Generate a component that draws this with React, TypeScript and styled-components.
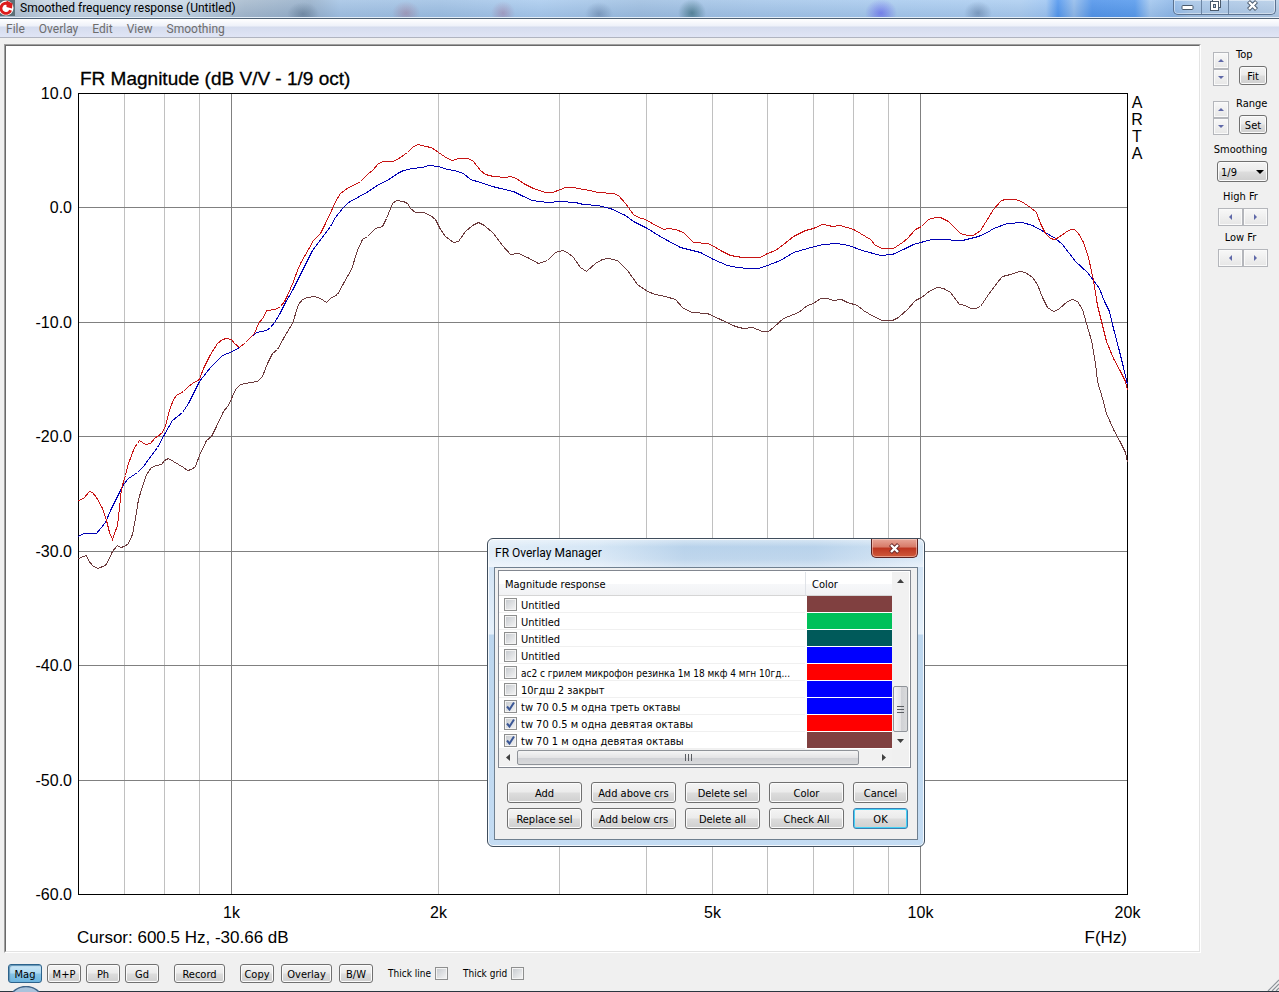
import React from "react";
import styled, { createGlobalStyle, css } from "styled-components";

const GlobalStyle = createGlobalStyle`
  * { box-sizing: border-box; }
  body {
    margin: 0;
    background: #f0f0f0;
    color: #000;
    font: 11px/14px "DejaVu Sans Condensed", "Noto Sans", sans-serif;
  }
  button, select, input { font: inherit; color: inherit; margin: 0; }
`;

const uiFont = `Roboto, "Noto Sans", sans-serif`;

/* ---------- window frame ---------- */

const Window = styled.div`
  position: relative;
  display: flex;
  flex-direction: column;
  min-height: 100vh;
  overflow: hidden;
`;

const TitleBar = styled.header`
  display: flex;
  justify-content: space-between;
  height: 19px;
  border-bottom: 1px solid #4f6275;
  box-shadow: inset 0 -1px 0 #e4eef8;
  background:
    linear-gradient(180deg, rgba(255, 255, 255, 0.15), rgba(90, 120, 160, 0.15)),
    radial-gradient(16px 12px at 303px 14px, rgba(70, 95, 120, 0.5), transparent),
    radial-gradient(14px 12px at 406px 13px, rgba(160, 110, 140, 0.5), transparent),
    radial-gradient(12px 12px at 503px 13px, rgba(160, 110, 150, 0.5), transparent),
    radial-gradient(14px 12px at 599px 14px, rgba(80, 110, 150, 0.5), transparent),
    radial-gradient(14px 14px at 692px 13px, rgba(40, 95, 110, 0.7), transparent),
    radial-gradient(16px 14px at 881px 13px, rgba(90, 90, 240, 0.7), transparent),
    radial-gradient(14px 12px at 978px 13px, rgba(70, 100, 140, 0.5), transparent),
    linear-gradient(90deg,
      #a9b9c9 0, #c8d6e4 50px, #cad9e7 180px, #a4b8cc 245px, #93adc8 310px,
      #a2c2e4 340px, #9dbfe3 440px, #a8caee 540px, #9cbde0 640px, #a3c5e9 760px,
      #a6c9ee 900px, #aaccf0 1020px, #9cc4f2 1046px, #4a92ee 1058px, #8fb9ea 1074px,
      #4a90ea 1092px, #5096ec 1135px, #9ec4ee 1150px, #8bb6e8 1172px, #a5c4e6 1190px, #b4cce6 100%);
`;

const WindowTitle = styled.h1`
  display: flex;
  align-items: center;
  gap: 5px;
  margin: 0;
  height: 16px;
  font: 12px/16px ${uiFont};
`;

const CaptionGroup = styled.div`
  display: flex;
  height: 15px;
  margin-right: 3px;
  border: 1px solid #5b7290;
  border-top: 0;
  border-radius: 0 0 5px 5px;
  box-shadow: inset 0 0 0 1px rgba(255, 255, 255, 0.45);
`;

const CaptionButton = styled.button<{ $wide?: boolean }>`
  display: flex;
  align-items: flex-start;
  justify-content: center;
  width: ${(p) => (p.$wide ? 47 : 27)}px;
  padding: 0;
  border: 0;
  background: none;
  & + & { border-left: 1px solid #6d86a4; }
`;

const MenuBar = styled.nav`
  display: flex;
  gap: 14px;
  height: 19px;
  padding: 0 6px;
  border-bottom: 1px solid #b0b4c0;
  background: linear-gradient(180deg, #ffffff 0, #eef1f9 7px, #d5dcee 8px, #e0e5f5 100%);
`;

const MenuItem = styled.button`
  padding: 0;
  border: 0;
  background: none;
  color: #6d6d6d;
  font: 12px/20px ${uiFont};
`;

const Workspace = styled.div`
  display: flex;
  flex: 1;
  padding-top: 6px;
`;

const MainColumn = styled.main`
  flex: 1;
  min-width: 0;
  padding-left: 4px;
`;

const ChartFrame = styled.section`
  border: 1px solid;
  border-color: #a0a0a0 #fff #fff #a0a0a0;
`;

const ChartSurface = styled.div`
  border: 1px solid;
  border-color: #696969 #e3e3e3 #e3e3e3 #696969;
  background: #fff;
`;

const ChartSvg = styled.svg`
  display: block;
  width: 100%;
  height: auto;
  font-family: "Liberation Sans", Arial, sans-serif;
  font-size: 16px;
`;

/* ---------- shared controls ---------- */

const buttonFace = css`
  border: 1px solid #707070;
  border-radius: 3px;
  background: linear-gradient(180deg, #f4f4f4 0, #ebebeb 48%, #dddddd 52%, #cfcfcf 100%);
  box-shadow: inset 0 0 0 1px #fbfbfb;
`;

const PushButton = styled.button<{ $width: number; $tall?: boolean; $pressed?: boolean; $isDefault?: boolean }>`
  ${buttonFace}
  width: ${(p) => p.$width}px;
  height: ${(p) => (p.$tall ? 21 : 19)}px;
  padding: 2px 0 0;
  line-height: 16px;
  white-space: nowrap;
  ${(p) => p.$pressed && css`
    border-color: #2c628b;
    background: linear-gradient(180deg, #cfe8f7 0, #b0daf2 45%, #86c2e6 55%, #6cb4de 100%);
    box-shadow: inset 1px 1px 1px #5f93b5;
  `}
  ${(p) => p.$isDefault && css`
    border-color: #3c7fb1;
    box-shadow: inset 0 0 0 1px #46d2f6;
  `}
`;

const CheckBox = styled.input.attrs({ type: "checkbox" })`
  appearance: none;
  flex: none;
  width: 13px;
  height: 13px;
  border: 1px solid #8e8f8f;
  background: linear-gradient(135deg, #c4c8cd, #f6f6f6);
  box-shadow: inset 0 0 0 1px #f4f4f4;
`;

const CheckHolder = styled.span`
  display: grid;
  flex: none;
  width: 13px;
  height: 13px;
  & > * { grid-area: 1 / 1; }
  svg { pointer-events: none; }
`;

/* ---------- bottom toolbar ---------- */

const ToolBar = styled.div`
  display: flex;
  align-items: center;
  gap: 15px;
  padding: 11px 4px 8px;
`;

const ToolGroup = styled.div<{ $gap: number }>`
  display: flex;
  gap: ${(p) => p.$gap}px;
`;

const ToolCheck = styled.label`
  display: flex;
  align-items: center;
  gap: 4px;
  height: 18px;
  font-size: 10px;
  white-space: nowrap;
`;

/* ---------- right side panel ---------- */

const SidePanel = styled.aside`
  flex: none;
  width: 78px;
  padding: 4px 11px 0 12px;
`;

const SpinStack = styled.div`
  display: flex;
  flex-direction: column;
  gap: 11px;
  margin-bottom: 8px;
`;

const SpinGroup = styled.div`
  display: flex;
  gap: 7px;
`;

const Spinner = styled.div`
  width: 16px;
  margin-top: 4px;
`;

const ArrowButton = styled.button<{ $kind: "spin" | "scroll" | "bar" }>`
  display: flex;
  align-items: center;
  justify-content: center;
  padding: 0;
  border: 1px solid #b4b6bb;
  background: linear-gradient(180deg, #f8f8f8, #e6e6e6);
  box-shadow: inset 0 0 0 1px #fafafa;
  width: ${(p) => (p.$kind === "spin" ? 16 : p.$kind === "scroll" ? 25 : 17)}px;
  height: ${(p) => (p.$kind === "scroll" ? 18 : 17)}px;
  ${(p) => p.$kind === "bar" && css`
    border: 0;
    background: none;
    box-shadow: none;
  `}
`;

const SpinLabel = styled.div`
  display: flex;
  flex-direction: column;
  width: 32px;
  gap: 4px;
  button { margin-left: 3px; }
`;

const SideField = styled.div<{ $space: number }>`
  display: flex;
  flex-direction: column;
  align-items: center;
  gap: 4px;
  margin-bottom: ${(p) => p.$space}px;
`;

const Pair = styled.div`
  display: flex;
  margin-left: 4px;
`;

const SelectWrap = styled.div`
  display: grid;
  align-items: center;
  margin-left: 4px;
  & > * { grid-area: 1 / 1; }
  svg { justify-self: end; margin-right: 4px; pointer-events: none; }
`;

const SmoothSelect = styled.select`
  ${buttonFace}
  appearance: none;
  width: 51px;
  height: 21px;
  padding: 2px 3px 0;
`;

/* ---------- overlay manager dialog ---------- */

const Dialog = styled.section`
  position: absolute;
  left: 487px;
  top: 538px;
  width: 438px;
  padding: 0 6px 6px;
  border: 1px solid #3f4d5c;
  border-radius: 6px;
  background:
    linear-gradient(180deg, rgba(255, 255, 255, 0.5), transparent 8px, transparent 20px, rgba(255, 255, 255, 0.3) 28px) 0 0 / 100% 28px no-repeat,
    linear-gradient(90deg, rgba(255, 255, 255, 0.5) 0, rgba(255, 255, 255, 0.3) 25%, rgba(160, 190, 220, 0.3) 45%, rgba(160, 190, 220, 0.3) 75%, rgba(255, 255, 255, 0.3) 100%) 0 0 / 100% 28px no-repeat,
    linear-gradient(180deg, #bdd8f0 0, #d3e4f5 28px, #e6f1fb 95px, #bcd6ee 96px, #c4dcf3 100%);
  box-shadow: inset 0 0 0 1px rgba(255, 255, 255, 0.8);
`;

const DialogHeader = styled.header`
  display: flex;
  justify-content: space-between;
  height: 28px;
`;

const DialogTitle = styled.h2`
  margin: 0;
  padding: 5px 1px;
  font: 12px/18px ${uiFont};
`;

const CloseButton = styled.button`
  display: flex;
  align-items: center;
  justify-content: center;
  width: 47px;
  height: 19px;
  padding: 0;
  border: 1px solid #5a2222;
  border-top: 0;
  border-radius: 0 0 5px 5px;
  background: linear-gradient(180deg, #e8a698 0, #d77a68 45%, #bd3520 50%, #cf5a3c 100%);
  box-shadow: inset 0 0 0 1px rgba(255, 220, 210, 0.5);
`;

const DialogBody = styled.div`
  padding: 2px 6px 10px 3px;
  border: 1px solid #6f8090;
  background: #f0f0f0;
`;

const ListBox = styled.div`
  display: grid;
  grid-template-columns: 1fr 17px;
  padding: 1px 1px 1px 0;
  border: 1px solid #828790;
  background: #fff;
`;

const ListTable = styled.table`
  width: 100%;
  border-collapse: separate;
  border-spacing: 0;
  table-layout: fixed;
  th, td { padding: 0; text-align: left; font-weight: normal; }
`;

const HeadCell = styled.th<{ $width?: number }>`
  width: ${(p) => (p.$width ? `${p.$width}px` : "auto")};
  height: 24px;
  border-bottom: 1px solid #d5d5d5;
  background: linear-gradient(180deg, #fff 50%, #f7f8fa 51%, #f1f2f4);
  & > span { display: block; padding: 2px 0 0 6px; }
  & + & { border-left: 1px solid #e0e3e8; }
  & + & > span { padding-left: 5px; }
`;

const NameCell = styled.td`
  height: 17px;
  border-bottom: 1px solid #f0f0f0;
`;

const RowLabel = styled.label<{ $long: boolean }>`
  display: flex;
  align-items: center;
  gap: 4px;
  height: 16px;
  padding: 1px 0 0 5px;
  font-size: ${(p) => (p.$long ? 10 : 11)}px;
  white-space: nowrap;
  & > span:last-child { padding-top: 2px; }
`;

const ColorCell = styled.td<{ $color: string }>`
  border-bottom: 1px solid #fff;
  border-left: 2px solid #fff;
  background: ${(p) => p.$color};
  background-clip: padding-box;
`;

const VerticalBar = styled.div`
  display: flex;
  flex-direction: column;
  background: #f1f1f1;
`;

const HorizontalBar = styled.div`
  display: flex;
  gap: 1px;
  height: 17px;
  background: #f1f1f1;
`;

const BarSpace = styled.div<{ $grow: number }>`
  flex: ${(p) => p.$grow};
`;

const Thumb = styled.div<{ $vertical?: boolean }>`
  display: flex;
  align-items: center;
  justify-content: center;
  border: 1px solid #8f9399;
  border-radius: 2px;
  ${(p) => p.$vertical
    ? css`height: 46px; margin: 0 1px; background: linear-gradient(90deg, #f5f5f5, #e4e4e6 50%, #cfd0d4 51%, #d9dadc);`
    : css`flex: 342; margin: 1px 0; background: linear-gradient(180deg, #f5f5f5, #e4e4e6 50%, #cfd0d4 51%, #d9dadc);`}
`;

const Corner = styled.div`
  background: #f0f0f0;
`;

const ButtonGrid = styled.div`
  display: grid;
  grid-template-columns: repeat(5, auto);
  justify-content: space-between;
  gap: 5px 9px;
  padding: 14px 3px 0 9px;
`;

/* ---------- bottom edge ---------- */

const TaskbarEdge = styled.div`
  position: relative;
  height: 1px;
  background: #2b3640;
`;

const StartOrb = styled.svg`
  position: absolute;
  left: 10px;
  bottom: 0;
`;

const SizeGrip = styled.svg`
  position: absolute;
  right: 0;
  bottom: 1px;
`;

/* ---------- chart data ---------- */

const PLOT = { left: 78, right: 1127, top: 93, bottom: 894 };
const FREQ = { min: 600, max: 20000 };
const LEVEL = { min: -60, max: 10 };

const xOf = (f: number) =>
  Math.round(PLOT.left + ((PLOT.right - PLOT.left) * Math.log(f / FREQ.min)) / Math.log(FREQ.max / FREQ.min)) + 0.5;
const yOf = (db: number) =>
  Math.round(PLOT.top + ((PLOT.bottom - PLOT.top) * (LEVEL.max - db)) / (LEVEL.max - LEVEL.min)) + 0.5;

const minorFreqs = [700, 800, 900, 2000, 3000, 4000, 5000, 6000, 7000, 8000, 9000];
const majorFreqs = [1000, 10000];
const levels = [10, 0, -10, -20, -30, -40, -50, -60];
const freqLabels: [number, string][] = [[1000, "1k"], [2000, "2k"], [5000, "5k"], [10000, "10k"], [20000, "20k"]];

const curves = [
  {
    name: "tw 70 1 м одна девятая октавы",
    color: "#6b3a3c",
    points:
      "78,558 83,556 86,555 88,560 92,565 97,568 105,565 108,560 112,551 117,545 120,547 124,546 128,543 132,534 135,518 138,499 142,486 146,474 151,467 156,465 161,464 164,460 168,458 173,461 183,467 187,470 191,469 195,466 199,455 206,440 211,436 216,426 223,411 228,405 232,396 235,389 240,384 250,382 257,381 262,376 267,363 272,353 277,349 283,338 292,323 298,304 302,299 307,297 314,296 320,298 326,302 330,298 337,294 343,283 351,269 357,250 362,239 367,236 375,228 382,226 386,218 392,203 396,200 403,201 407,203 410,208 415,212 423,212 430,215 435,219 440,229 445,236 453,242 458,241 465,231 472,225 478,222 484,225 493,233 502,245 510,254 518,253 527,257 538,263 547,260 555,252 562,250 567,252 573,257 580,267 586,271 595,263 602,259 608,258 617,260 627,270 637,284 647,291 655,294 665,296 675,299 683,308 692,312 707,313 720,319 735,326 743,328 752,327 762,331 768,331 773,327 783,318 798,312 807,305 813,303 820,298 827,298 833,300 841,299 847,302 857,305 863,310 873,316 882,320 892,320 898,317 907,309 915,300 921,297 930,290 937,287 943,288 950,292 959,304 965,305 970,308 975,308 980,306 988,294 997,282 1002,276 1010,274 1019,271 1025,272 1032,277 1037,284 1042,297 1047,307 1053,311 1058,309 1067,301 1072,299 1077,301 1082,309 1086,323 1091,340 1095,363 1097,381 1102,398 1106,413 1113,429 1120,442 1125,452 1127,462",
  },
  {
    name: "tw 70 0.5 м одна треть октавы",
    color: "#0000b4",
    points:
      "78,536 83,533 96,533 105,522 110,510 116,498 123,484 128,478 137,472 143,466 148,459 157,447 164,434 172,420 182,412 188,403 199,381 210,367 222,355 232,351 239,347 245,342 251,336 256,332 266,330 270,327 274,322 279,314 285,302 292,290 300,274 312,250 330,226 335,217 342,208 348,202 368,191 375,186 390,178 397,173 403,170 412,168 422,167 428,165 438,166 447,169 454,170 463,173 470,179 480,182 492,186 500,188 513,191 523,196 532,200 547,202 560,201 575,202 583,204 597,205 610,208 625,215 633,221 647,228 658,235 667,240 680,247 700,252 713,259 727,265 737,267 748,268 758,268 767,265 780,260 793,252 807,248 822,244 837,243 848,245 862,250 880,255 892,254 903,249 913,244 931,239 945,239 955,240 962,240 978,236 987,232 993,228 1007,223 1022,222 1032,225 1043,231 1055,238 1062,244 1075,261 1087,272 1093,280 1099,288 1104,301 1109,311 1113,328 1118,347 1123,367 1127,384",
  },
  {
    name: "tw 70 0.5 м одна девятая октавы",
    color: "#c81414",
    points:
      "78,500 83,498 89,491 92,492 96,497 102,508 106,520 109,532 112,539 114,533 117,525 119,507 121,488 125,475 128,463 134,447 137,443 139,440 142,442 145,444 150,443 155,437 157,436 162,432 165,425 169,410 173,399 176,395 183,391 188,386 192,383 199,379 203,368 210,354 217,343 222,339 226,338 231,339 234,343 239,347 245,342 250,337 254,333 258,323 263,317 266,310 275,309 280,306 284,301 287,295 293,281 297,270 300,263 313,240 320,233 325,223 332,208 335,201 340,193 348,187 355,184 360,181 367,174 373,169 378,163 383,161 392,161 397,159 407,152 413,146 418,144 425,146 431,147 438,152 447,158 452,160 458,158 468,158 473,161 480,170 485,174 493,176 505,177 510,176 516,178 523,183 533,188 545,192 552,192 560,189 565,187 573,187 583,189 590,190 597,192 613,193 618,195 625,203 633,214 638,217 645,219 657,226 664,229 667,228 675,229 683,232 688,237 693,242 707,243 712,245 720,250 730,255 742,257 760,257 767,253 775,250 783,244 793,236 805,230 813,228 822,224 828,225 832,226 840,225 853,229 860,233 870,239 875,245 882,248 893,248 902,242 907,238 915,229 921,226 928,219 935,217 940,217 948,221 955,228 960,233 967,235 973,235 980,230 985,222 993,209 1001,200 1005,199 1015,199 1021,201 1030,207 1036,212 1040,223 1045,233 1050,238 1054,239 1058,237 1065,232 1070,229 1074,229 1078,233 1083,242 1088,257 1093,280 1097,305 1102,325 1106,341 1113,358 1120,371 1125,381 1127,390",
  },
];

const overlays = [
  { name: "Untitled", color: "#804040", on: false },
  { name: "Untitled", color: "#00c05a", on: false },
  { name: "Untitled", color: "#005a5a", on: false },
  { name: "Untitled", color: "#0000ff", on: false },
  { name: "ас2 с грилем микрофон резинка 1м 18 мкф 4 мгн 10гд...", color: "#ff0000", on: false },
  { name: "10гдш 2 закрыт", color: "#0000ff", on: false },
  { name: "tw 70 0.5 м одна треть октавы", color: "#0000ff", on: true },
  { name: "tw 70 0.5 м одна девятая октавы", color: "#ff0000", on: true },
  { name: "tw 70 1 м одна девятая октавы", color: "#804040", on: true },
];

/* ---------- small drawings ---------- */

const arrowShapes = {
  up: "M0 4H7L3.5 0Z",
  down: "M0 0H7L3.5 4Z",
  left: "M4 0V7L0 3.5Z",
  right: "M0 0V7L4 3.5Z",
};

function Arrow({ dir, color = "#5f68a8", size = 6 }: { dir: keyof typeof arrowShapes; color?: string; size?: number }) {
  const tall = dir === "left" || dir === "right";
  const depth = Math.ceil(size * 0.5);
  return (
    <svg
      width={tall ? depth : size}
      height={tall ? size : depth}
      viewBox={tall ? "0 0 4 7" : "0 0 7 4"}
      preserveAspectRatio="none"
      aria-hidden="true"
    >
      <path d={arrowShapes[dir]} fill={color} />
    </svg>
  );
}

function AppIcon() {
  return (
    <svg width="15" height="16" viewBox="0 0 15 16" aria-hidden="true">
      <rect width="15" height="16" fill="#5c7078" />
      <circle cx="6" cy="8" r="7.5" fill="#fff" />
      <path d="M10.6 10.2A5 5 0 1 1 7.5 3.6" fill="none" stroke="#dc1c1c" strokeWidth="3" />
      <path d="M6.5 0.5L12.5 3.5L12 8.5L6.5 7Z" fill="#dc1c1c" />
    </svg>
  );
}

function CrossIcon({ stroke }: { stroke: string }) {
  return (
    <svg width="13" height="11" viewBox="0 0 13 11" aria-hidden="true">
      <path d="M2.5 1.5L10.5 9.5M10.5 1.5L2.5 9.5" stroke={stroke} strokeWidth="4.2" />
      <path d="M3 2L10 9M10 2L3 9" stroke="#fff" strokeWidth="2.4" />
    </svg>
  );
}

function Tick({ checked, id }: { checked?: boolean; id: string }) {
  return (
    <CheckHolder>
      <CheckBox id={id} defaultChecked={checked} />
      {checked && (
        <svg width="13" height="13" viewBox="0 0 13 13" aria-hidden="true">
          <path d="M3 6.5L5.5 9.5L10 2.5" fill="none" stroke="#3b5796" strokeWidth="2" />
        </svg>
      )}
    </CheckHolder>
  );
}

function Grip({ vertical }: { vertical?: boolean }) {
  return (
    <svg width="8" height="8" viewBox="0 0 8 8" shapeRendering="crispEdges" aria-hidden="true">
      <path d={vertical ? "M0 1.5H7M0 4.5H7M0 7.5H7" : "M1.5 0V7M4.5 0V7M7.5 0V7"} stroke="#5a5d62" />
    </svg>
  );
}

/* ---------- sections ---------- */

function ResponseChart() {
  return (
    <ChartSvg viewBox="6 46 1193 905" role="img" aria-label="FR Magnitude">
      <g shapeRendering="crispEdges" fill="none">
        {minorFreqs.map((f) => (
          <path key={f} d={`M${xOf(f)} ${PLOT.top}V${PLOT.bottom}`} stroke="#c0c0c0" />
        ))}
        {majorFreqs.map((f) => (
          <path key={f} d={`M${xOf(f)} ${PLOT.top}V${PLOT.bottom}`} stroke="#808080" />
        ))}
        {levels.map((v) => (
          <path key={v} d={`M${PLOT.left} ${yOf(v)}H${PLOT.right}`} stroke="#808080" />
        ))}
        <rect x={PLOT.left + 0.5} y={PLOT.top + 0.5} width={PLOT.right - PLOT.left} height={PLOT.bottom - PLOT.top} stroke="#000" />
        {curves.map((c) => (
          <polyline key={c.name} points={c.points} stroke={c.color} transform="translate(0.5 0.5)" />
        ))}
      </g>
      <text x="80" y="85" fontSize="19" stroke="#000" strokeWidth="0.3">FR Magnitude (dB V/V - 1/9 oct)</text>
      {levels.map((v) => (
        <text key={v} x="72" y={yOf(v) + 5.5} textAnchor="end">{v.toFixed(1)}</text>
      ))}
      {freqLabels.map(([f, label]) => (
        <text key={f} x={xOf(f)} y="918" textAnchor="middle">{label}</text>
      ))}
      {["A", "R", "T", "A"].map((ch, i) => (
        <text key={i} x="1137" y={108 + i * 17} textAnchor="middle">{ch}</text>
      ))}
      <text x="77" y="943" fontSize="17">Cursor: 600.5 Hz, -30.66 dB</text>
      <text x="1127" y="943" fontSize="17" textAnchor="end">F(Hz)</text>
    </ChartSvg>
  );
}

function SpinControl({ label, action }: { label: string; action: string }) {
  return (
    <SpinGroup>
      <Spinner>
        <ArrowButton $kind="spin" aria-label={`${label} up`}><Arrow dir="up" /></ArrowButton>
        <ArrowButton $kind="spin" aria-label={`${label} down`}><Arrow dir="down" /></ArrowButton>
      </Spinner>
      <SpinLabel>
        <span>{label}</span>
        <PushButton $width={28}>{action}</PushButton>
      </SpinLabel>
    </SpinGroup>
  );
}

function FreqControl({ label, space }: { label: string; space: number }) {
  return (
    <SideField $space={space}>
      <span>{label}</span>
      <Pair>
        <ArrowButton $kind="scroll" aria-label={`${label} down`}><Arrow dir="left" /></ArrowButton>
        <ArrowButton $kind="scroll" aria-label={`${label} up`}><Arrow dir="right" /></ArrowButton>
      </Pair>
    </SideField>
  );
}

function OverlayManager() {
  return (
    <Dialog role="dialog" aria-labelledby="overlay-title">
      <DialogHeader>
        <DialogTitle id="overlay-title">FR Overlay Manager</DialogTitle>
        <CloseButton aria-label="Close"><CrossIcon stroke="#6b2a2a" /></CloseButton>
      </DialogHeader>
      <DialogBody>
        <ListBox>
          <ListTable>
            <thead>
              <tr>
                <HeadCell><span>Magnitude response</span></HeadCell>
                <HeadCell $width={87}><span>Color</span></HeadCell>
              </tr>
            </thead>
            <tbody>
              {overlays.map((o, i) => (
                <tr key={i}>
                  <NameCell>
                    <RowLabel htmlFor={`overlay-${i}`} $long={o.name.length > 40}>
                      <Tick id={`overlay-${i}`} checked={o.on} />
                      <span>{o.name}</span>
                    </RowLabel>
                  </NameCell>
                  <ColorCell $color={o.color} />
                </tr>
              ))}
            </tbody>
          </ListTable>
          <VerticalBar>
            <ArrowButton $kind="bar" aria-label="Scroll up"><Arrow dir="up" color="#404040" size={7} /></ArrowButton>
            <BarSpace $grow={1} />
            <Thumb $vertical><Grip vertical /></Thumb>
            <ArrowButton $kind="bar" aria-label="Scroll down"><Arrow dir="down" color="#404040" size={7} /></ArrowButton>
          </VerticalBar>
          <HorizontalBar>
            <ArrowButton $kind="bar" aria-label="Scroll left"><Arrow dir="left" color="#404040" size={7} /></ArrowButton>
            <Thumb><Grip /></Thumb>
            <BarSpace $grow={14} />
            <ArrowButton $kind="bar" aria-label="Scroll right"><Arrow dir="right" color="#404040" size={7} /></ArrowButton>
          </HorizontalBar>
          <Corner />
        </ListBox>
        <ButtonGrid>
          <PushButton $tall $width={75}>Add</PushButton>
          <PushButton $tall $width={85}>Add above crs</PushButton>
          <PushButton $tall $width={75}>Delete sel</PushButton>
          <PushButton $tall $width={75}>Color</PushButton>
          <PushButton $tall $width={55}>Cancel</PushButton>
          <PushButton $tall $width={75}>Replace sel</PushButton>
          <PushButton $tall $width={85}>Add below crs</PushButton>
          <PushButton $tall $width={75}>Delete all</PushButton>
          <PushButton $tall $width={75}>Check All</PushButton>
          <PushButton $tall $width={55} $isDefault>OK</PushButton>
        </ButtonGrid>
      </DialogBody>
    </Dialog>
  );
}

export default function App() {
  return (
    <>
      <GlobalStyle />
      <Window>
        <TitleBar>
          <WindowTitle><AppIcon />Smoothed frequency response (Untitled)</WindowTitle>
          <CaptionGroup>
            <CaptionButton aria-label="Minimize">
              <svg width="13" height="11" viewBox="0 0 13 11"><rect x="1" y="5.5" width="11" height="4" rx="1" fill="#fff" stroke="#4a5a6c" /></svg>
            </CaptionButton>
            <CaptionButton aria-label="Restore">
              <svg width="13" height="12" viewBox="0 0 13 12">
                <rect x="3.5" y="-1.5" width="8" height="9" fill="#fff" stroke="#4a5a6c" />
                <rect x="1.5" y="1.5" width="8" height="9" fill="#fff" stroke="#4a5a6c" />
                <rect x="4.5" y="4.5" width="2" height="3" fill="#b5cbe4" stroke="#4a5a6c" />
              </svg>
            </CaptionButton>
            <CaptionButton $wide aria-label="Close"><CrossIcon stroke="#4a5a6c" /></CaptionButton>
          </CaptionGroup>
        </TitleBar>
        <MenuBar>
          {["File", "Overlay", "Edit", "View", "Smoothing"].map((m) => (
            <MenuItem key={m}>{m}</MenuItem>
          ))}
        </MenuBar>
        <Workspace>
          <MainColumn>
            <ChartFrame>
              <ChartSurface>
                <ResponseChart />
              </ChartSurface>
            </ChartFrame>
            <ToolBar>
              <ToolGroup $gap={5}>
                <PushButton $width={34} $pressed>Mag</PushButton>
                <PushButton $width={34}>M+P</PushButton>
                <PushButton $width={34}>Ph</PushButton>
                <PushButton $width={34}>Gd</PushButton>
              </ToolGroup>
              <PushButton $width={51}>Record</PushButton>
              <ToolGroup $gap={7}>
                <PushButton $width={34}>Copy</PushButton>
                <PushButton $width={51}>Overlay</PushButton>
                <PushButton $width={34}>B/W</PushButton>
              </ToolGroup>
              <ToolCheck htmlFor="thick-line">Thick line<Tick id="thick-line" /></ToolCheck>
              <ToolCheck htmlFor="thick-grid">Thick grid<Tick id="thick-grid" /></ToolCheck>
            </ToolBar>
          </MainColumn>
          <SidePanel>
            <SpinStack>
              <SpinControl label="Top" action="Fit" />
              <SpinControl label="Range" action="Set" />
            </SpinStack>
            <SideField $space={8}>
              <label htmlFor="smoothing">Smoothing</label>
              <SelectWrap>
                <SmoothSelect id="smoothing" defaultValue="1/9">
                  <option>1/9</option>
                </SmoothSelect>
                <Arrow dir="down" color="#000" size={8} />
              </SelectWrap>
            </SideField>
            <FreqControl label="High Fr" space={5} />
            <FreqControl label="Low Fr" space={0} />
          </SidePanel>
        </Workspace>
        <TaskbarEdge>
          <StartOrb width="32" height="6" viewBox="0 0 32 6" aria-hidden="true">
            <ellipse cx="16" cy="12" rx="15" ry="11.5" fill="#a9c3dc" stroke="#3f6488" strokeWidth="1.4" />
          </StartOrb>
        </TaskbarEdge>
        <SizeGrip width="12" height="12" viewBox="0 0 12 12" aria-hidden="true">
          <path d="M1 12L12 1M5 12L12 5M9 12L12 9" stroke="#8c9299" strokeWidth="1.2" />
        </SizeGrip>
        <OverlayManager />
      </Window>
    </>
  );
}
